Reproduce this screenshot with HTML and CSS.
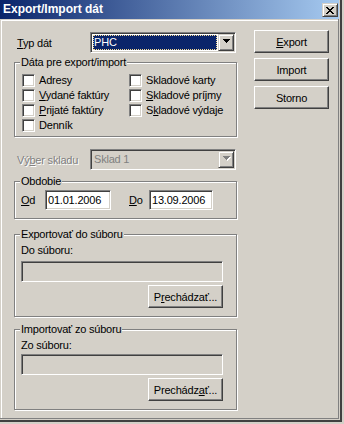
FILE: index.html
```html
<!DOCTYPE html>
<html lang="sk">
<head>
<meta charset="utf-8">
<title>Export/Import dát</title>
<link rel="stylesheet" href="styles.css">
</head>
<body>
<div class="window">
  <div class="titlebar">
    <span class="title">Export/Import dát</span>
    <button class="close" aria-label="Zavrieť"><svg width="8" height="7" viewBox="0 0 8 7" shape-rendering="crispEdges"><path d="M0 0h2v1H0zM6 0h2v1H6zM1 1h2v1H1zM5 1h2v1H5zM2 2h4v1H2zM3 3h2v1H3zM2 4h4v1H2zM1 5h2v1H1zM5 5h2v1H5zM0 6h2v1H0zM6 6h2v1H6z"/></svg></button>
  </div>
  <div class="client">
    <div class="left">
      <div class="row">
        <span class="lbl"><u>T</u>yp dát</span>
        <div class="combo">
          <div class="field focus">PHC</div>
          <div class="drop"><svg width="7" height="4" viewBox="0 0 7 4" shape-rendering="crispEdges"><path d="M0 0h7v1H0zM1 1h5v1H1zM2 2h3v1H2zM3 3h1v1H3z"/></svg></div>
        </div>
      </div>

      <div class="group g-data">
        <div class="caption">Dáta pre export/import</div>
        <div class="checks">
          <label class="cb"><input type="checkbox"><span>Adresy</span></label>
          <label class="cb"><input type="checkbox"><span>Skladové karty</span></label>
          <label class="cb"><input type="checkbox"><span><u>V</u>ydané faktúry</span></label>
          <label class="cb"><input type="checkbox"><span><u>S</u>kladové príjmy</span></label>
          <label class="cb"><input type="checkbox"><span><u>P</u>rijaté faktúry</span></label>
          <label class="cb"><input type="checkbox"><span>S<u>k</u>ladové výdaje</span></label>
          <label class="cb"><input type="checkbox"><span>Denník</span></label>
        </div>
      </div>

      <div class="row row-sklad">
        <span class="lbl disabled">Vý<u>b</u>er skladu</span>
        <div class="combo combo-disabled">
          <div class="field">Sklad 1</div>
          <div class="drop"><svg width="8" height="5" viewBox="0 0 8 5" shape-rendering="crispEdges"><path fill="#ffffff" d="M1 1h7v1H1zM2 2h5v1H2zM3 3h3v1H3zM4 4h1v1H4z"/><path fill="#808080" d="M0 0h7v1H0zM1 1h5v1H1zM2 2h3v1H2zM3 3h1v1H3z"/></svg></div>
        </div>
      </div>

      <div class="group g-date">
        <div class="caption">Obdobie</div>
        <div class="dates">
          <span class="dl dl-od"><u>O</u>d</span><input class="edit e-od" type="text" value="01.01.2006">
          <span class="dl dl-do"><u>D</u>o</span><input class="edit e-do" type="text" value="13.09.2006">
        </div>
      </div>

      <div class="group g-export">
        <div class="caption">Exportovať do súboru</div>
        <div class="file">
          <div class="flabel">Do súboru:</div>
          <input class="edit path" type="text" disabled>
          <div class="browse"><button class="btn">P<u>r</u>echádzať...</button></div>
        </div>
      </div>

      <div class="group g-import">
        <div class="caption">Importovať zo súboru</div>
        <div class="file">
          <div class="flabel">Zo súboru:</div>
          <input class="edit path" type="text" disabled>
          <div class="browse"><button class="btn">Prechádz<u>a</u>ť...</button></div>
        </div>
      </div>
    </div>

    <div class="buttons">
      <button class="btn"><u>E</u>xport</button>
      <button class="btn">Import</button>
      <button class="btn">Storno</button>
    </div>
  </div>
</div>
</body>
</html>
```

FILE: styles.css
```css
* { box-sizing: border-box; }

html, body {
  margin: 0;
  padding: 0;
  background: #d4d0c8;
}

body {
  font-family: "Liberation Sans", Arial, sans-serif;
  font-size: 11px;
  letter-spacing: -0.2px;
  color: #000;
}

u { text-decoration: underline; }

.window {
  width: 342px;
  height: 422px;
  background: #d4d0c8;
  box-shadow: inset -2px -2px #404040, inset -3px -3px #d4d0c8, inset -4px -4px #808080;
}

/* title bar */
.titlebar {
  width: 339px;
  height: 19px;
  display: flex;
  justify-content: space-between;
  align-items: flex-start;
  padding: 0 1px 0 3px;
  background: linear-gradient(to right, #0a246a, #a6caf0);
}

.title {
  color: #fff;
  font-weight: bold;
  font-size: 12px;
  line-height: 19px;
  letter-spacing: 0;
  white-space: nowrap;
}

.close {
  margin-top: 3px;
  width: 16px;
  height: 14px;
  padding: 0;
  display: flex;
  align-items: center;
  justify-content: center;
  background: #d4d0c8;
  border: 1px solid;
  border-color: #d4d0c8 #404040 #404040 #d4d0c8;
  box-shadow: inset 1px 1px #fff, inset -1px -1px #808080;
}
.close svg { display: block; }

/* client */
.client {
  margin: 1px 0 0 1px;
  width: 337px;
  height: 398px;
  border-top: 1px solid #fff;
  border-left: 1px solid #fff;
  display: flex;
  padding-left: 12px;
}

.left {
  width: 223px;
  flex: none;
  padding-top: 11px;
}

.buttons {
  margin-left: 17px;
  padding-top: 9px;
  display: flex;
  flex-direction: column;
  gap: 5px;
}

/* push button */
.btn {
  width: 75px;
  height: 23px;
  padding: 1px 0 0;
  margin: 0;
  font: inherit;
  letter-spacing: inherit;
  color: #000;
  background: #d4d0c8;
  border: 1px solid;
  border-color: #fff #404040 #404040 #fff;
  box-shadow: inset -1px -1px #808080;
  white-space: nowrap;
}

/* label + combo rows */
.row {
  display: flex;
  align-items: center;
  height: 21px;
}

.lbl {
  width: 76px;
  flex: none;
  padding-left: 3px;
  white-space: nowrap;
}

.disabled {
  color: #808080;
  text-shadow: 1px 1px 0 #fff;
}

.row-sklad { margin-top: 12px; }

.combo {
  width: 146px;
  height: 21px;
  display: flex;
  padding: 1px;
  background: #fff;
  border: 1px solid;
  border-color: #808080 #fff #fff #808080;
  box-shadow: inset 1px 1px #404040, inset -1px -1px #d4d0c8;
}

.combo-disabled { background: #d4d0c8; }
.combo-disabled .field { color: #808080; }

.field {
  flex: 1;
  margin: 1px;
  line-height: 13px;
  border: 1px solid transparent;
  white-space: nowrap;
  overflow: hidden;
}

.focus {
  background: #0a246a;
  color: #fff;
  border: 1px dotted #f5db95;
}

.drop {
  width: 16px;
  height: 17px;
  flex: none;
  display: flex;
  justify-content: center;
  align-items: flex-start;
  padding: 4px 0 0 1px;
  background: #d4d0c8;
  border: 1px solid;
  border-color: #d4d0c8 #404040 #404040 #d4d0c8;
  box-shadow: inset 1px 1px #fff, inset -1px -1px #808080;
}
.drop svg { display: block; }

/* group boxes */
.group {
  width: 223px;
  border: 1px solid #808080;
  box-shadow: inset 1px 1px #fff, 1px 1px #fff;
}

.caption {
  width: max-content;
  margin: -7px 0 0 5px;
  padding: 0 1px;
  line-height: 13px;
  background: #d4d0c8;
  white-space: nowrap;
}

.g-data { margin-top: 9px; }
.g-date { margin-top: 11px; }
.g-export { margin-top: 15px; }
.g-import { margin-top: 12px; }

/* checkboxes */
.checks {
  display: grid;
  grid-template-columns: 107px auto;
  grid-auto-rows: 15px;
  padding: 4px 0 3px 7px;
}

.cb {
  display: flex;
  align-items: center;
  gap: 4px;
  white-space: nowrap;
}
.cb span { line-height: 13px; }

.cb input {
  appearance: none;
  -webkit-appearance: none;
  width: 13px;
  height: 13px;
  margin: 0;
  flex: none;
  background: #fff;
  border: 1px solid;
  border-color: #808080 #fff #fff #808080;
  box-shadow: inset 1px 1px #404040, inset -1px -1px #d4d0c8;
}

/* date row */
.dates {
  display: flex;
  align-items: center;
  height: 20px;
  margin: 2px 0 8px;
  padding-left: 6px;
}

.dl { flex: none; }
.dl-od { width: 24px; }
.dl-do { width: 20px; margin-left: 18px; }

.edit {
  height: 20px;
  margin: 0;
  padding: 0 0 0 2px;
  font: inherit;
  letter-spacing: inherit;
  color: #000;
  background: #fff;
  outline: none;
  border: 1px solid;
  border-color: #808080 #fff #fff #808080;
  box-shadow: inset 1px 1px #404040, inset -1px -1px #d4d0c8;
}

.e-od { width: 66px; }
.e-do { width: 64px; }

/* file groups */
.file {
  width: 208px;
  padding: 0 0 8px 6px;
}

.flabel {
  margin-top: 3px;
  line-height: 13px;
}

.path {
  display: block;
  width: 202px;
  height: 21px;
  background: #d4d0c8;
}

.g-export .path { margin-top: 4px; }
.g-import .path { margin-top: 2px; }

.browse {
  display: flex;
  justify-content: flex-end;
  margin-top: 3px;
}
```
